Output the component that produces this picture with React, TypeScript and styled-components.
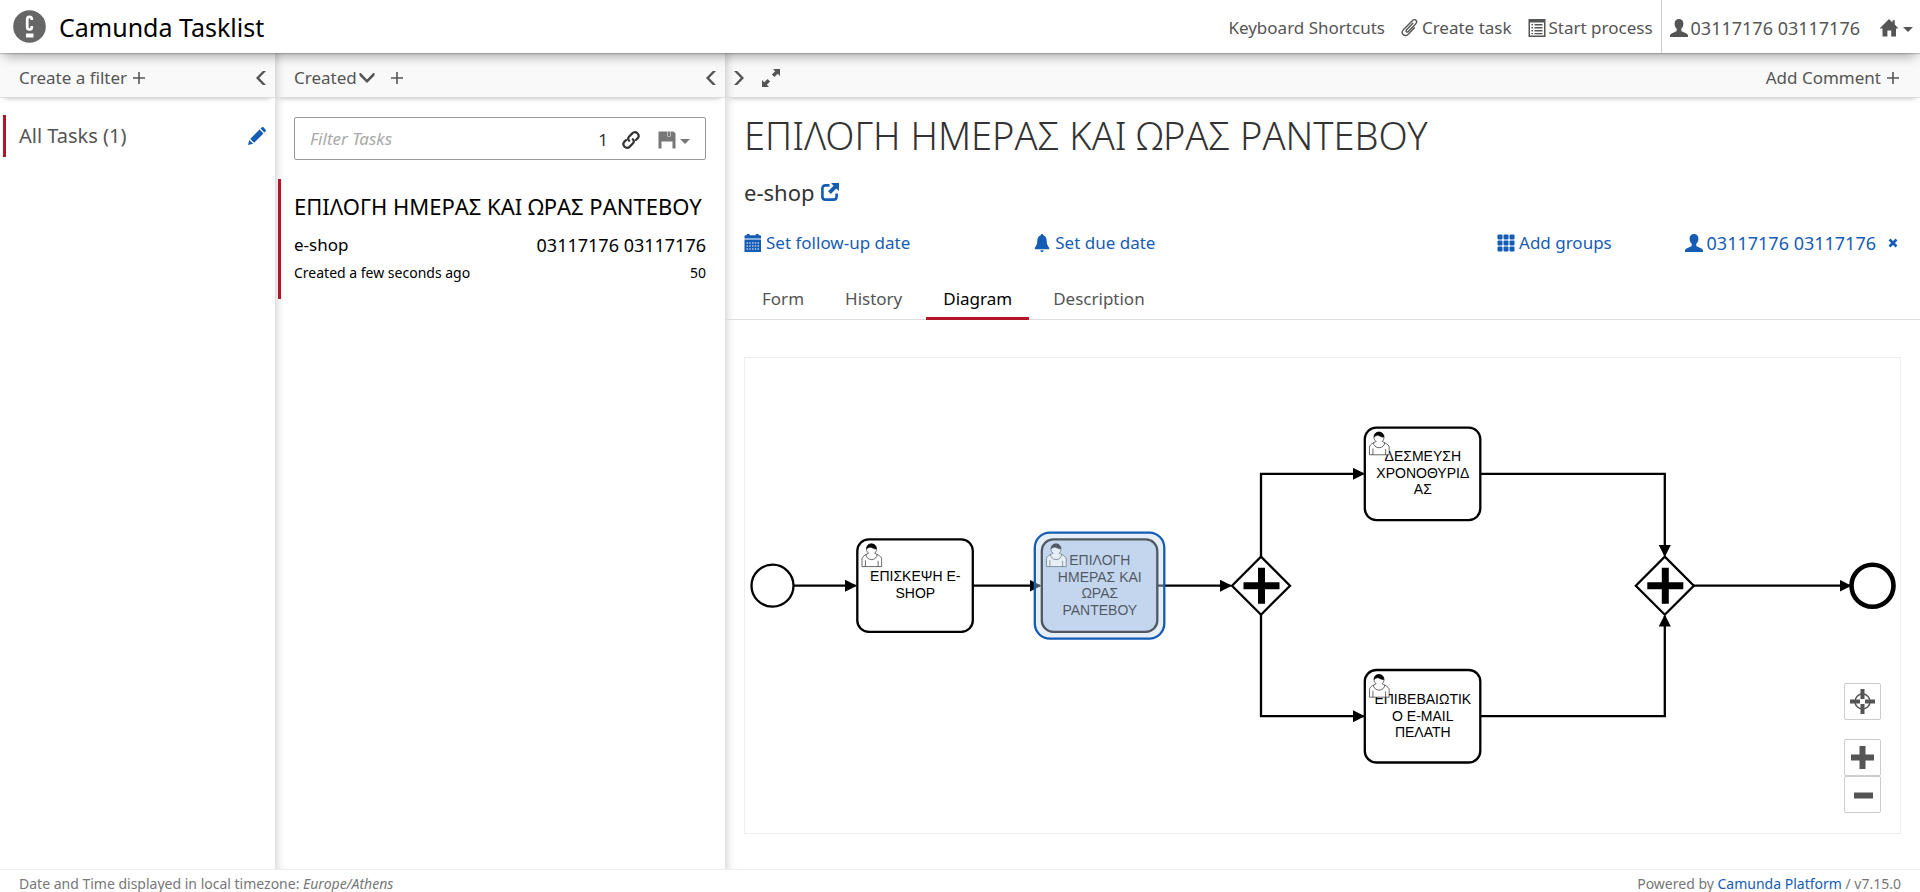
import React from 'react';
import styled, { createGlobalStyle, css } from 'styled-components';

const blue = '#155cb5';
const grey = '#555';
const red = '#b5152b';

const GlobalStyle = createGlobalStyle`
  *, *::before, *::after { box-sizing: border-box; }
  body {
    margin: 0;
    background: #fff;
    color: #333;
    font-family: 'Noto Sans', 'Open Sans', sans-serif;
    font-size: 17px;
    line-height: 24px;
  }
  h1, h2, h3, p, ul { margin: 0; padding: 0; font-weight: 400; }
  ul { list-style: none; }
  a { color: ${blue}; text-decoration: none; }
  button, input { font: inherit; color: inherit; }
`;

/* ---------- icons ---------- */

const Glyph = styled.svg<{ $size?: number }>`
  display: block;
  flex: none;
  width: ${p => p.$size ?? 18}px;
  height: ${p => p.$size ?? 18}px;
  fill: currentColor;
`;

const UserIcon = () => (
  <Glyph viewBox="0 0 18 18">
    <path d="M9 0C11.600 0 13.400 1.700 13.400 4.500C13.400 6.900 12.600 8.700 11.300 9.800V11.400C11.300 12 11.600 12.300 12.200 12.600L16.400 14.600C17.500 15.100 18 15.800 18 16.700V18H0V16.700C0 15.800 .5 15.100 1.600 14.600L5.800 12.600C6.400 12.300 6.700 12 6.700 11.400V9.800C5.400 8.700 4.600 6.900 4.600 4.500C4.600 1.700 6.400 0 9 0Z" />
  </Glyph>
);

const HomeIcon = () => (
  <Glyph viewBox="0 0 18 18">
    <path d="M9 0L12.500 3.400V1.300H14.800V5.600L18.500 9.400H16V17.500H11.200V11.600H7.400V17.500H2.500V9.400H-.5Z" />
  </Glyph>
);

const PaperclipIcon = () => (
  <Glyph viewBox="0 0 18 18">
    <path
      d="M11.800 4.200L5.600 10.800C4.300 12.200 5.900 13.900 7.300 12.500L14.600 5C17.300 2 14 -.8 11.300 1.700L2.500 10.600C-1 14.400 3.500 18.600 7.200 15.200L13.400 8.800"
      fill="none"
      stroke="currentColor"
      strokeWidth="1.400"
      strokeLinecap="round"
    />
  </Glyph>
);

const ListIcon = () => (
  <Glyph viewBox="0 0 18 18">
    <path
      fillRule="evenodd"
      d="M.5 0H17.500V18H.5ZM2 3.500V16.500H16V3.500ZM3.500 5H5V6.500H3.500ZM6.500 5H14.500V6.500H6.500ZM3.500 8H5V9.500H3.500ZM6.500 8H14.500V9.500H6.500ZM3.500 11H5V12.500H3.500ZM6.500 11H14.500V12.500H6.500ZM3.500 14H5V15.200H3.500ZM6.500 14H14.500V15.200H6.500Z"
    />
  </Glyph>
);

const PencilIcon = () => (
  <Glyph viewBox="0 0 18 18">
    <path d="M0 18L1.300 12.900L5.100 16.700ZM2.200 11.900L11.600 2.500L15.500 6.400L6.100 15.800ZM12.500 1.600L13.600 .5C14.200 -.1 15 -.1 15.600 .5L17.500 2.400C18.100 3 18.100 3.800 17.500 4.400L16.400 5.500Z" />
  </Glyph>
);

const LinkIcon = () => (
  <Glyph viewBox="0 0 18 18">
    <g fill="none" stroke="currentColor" strokeWidth="2.200" strokeLinecap="round">
      <path d="M7.200 9.800C5.800 8.400 6 6.700 7.200 5.500L10.300 2.400C12 .7 14 .9 15.400 2.300C16.900 3.800 17 5.800 15.500 7.400L13.900 9" />
      <path d="M10.800 8.200C12.200 9.600 12 11.300 10.800 12.500L7.700 15.600C6 17.300 4 17.100 2.600 15.700C1.100 14.200 1 12.200 2.500 10.600L4.100 9" />
    </g>
  </Glyph>
);

const SaveIcon = () => (
  <Glyph viewBox="0 0 18 18">
    <path fillRule="evenodd" d="M.5 .5H4V6.500H13V.5H15.500L17.500 2.500V17.500H14.500V10.500H3.500V17.500H.5ZM10 .5H12V5H10Z" />
    <path d="M4 .5H9.500V7H4ZM12.500 .5H13V7H4V5.500H12.500Z" />
  </Glyph>
);

const ExpandIcon = () => (
  <Glyph viewBox="0 0 18 18">
    <path d="M18 0V7L15.700 4.800L12.400 8.100L9.900 5.600L13.200 2.300L11 0ZM0 18V11L2.300 13.200L5.600 9.900L8.100 12.400L4.800 15.700L7 18Z" />
  </Glyph>
);

const ExternalIcon = () => (
  <Glyph viewBox="0 0 18 18">
    <path d="M10 0H18V8L15.300 5.400L9.800 10.900L7.100 8.200L12.600 2.700Z" />
    <path d="M8.500 2.400H4.600C2.600 2.400 1.400 3.600 1.400 5.600V13.400C1.400 15.400 2.600 16.600 4.600 16.600H12.400C14.400 16.600 15.600 15.400 15.600 13.400V10.500" fill="none" stroke="currentColor" strokeWidth="2.600" />
  </Glyph>
);

const CalendarIcon = () => (
  <Glyph viewBox="0 0 18 18">
    <path d="M.5 4.600V2.200Q.5 1.200 1.500 1.200H2.800V0H5.600V1.200H11.800V0H14.600V1.200H16Q17 1.200 17 2.200V4.600Z" />
    <path
      fillRule="evenodd"
      d="M.5 5.500H17V18H.5ZM2.500 8.400V9.500H4.100V8.400ZM5.300 8.400V9.500H6.800V8.400ZM8 8.400V9.500H9.500V8.400ZM10.700 8.400V9.500H12.200V8.400ZM13.400 8.400V9.500H15V8.400ZM2.500 11.400V12.500H4.100V11.400ZM5.300 11.400V12.500H6.800V11.400ZM8 11.400V12.500H9.500V11.400ZM10.700 11.400V12.500H12.200V11.400ZM13.400 11.400V12.500H15V11.400ZM2.500 14.400V15.500H4.100V14.400ZM5.300 14.400V15.500H6.800V14.400ZM8 14.400V15.500H9.500V14.400ZM10.700 14.400V15.500H12.200V14.400ZM13.400 14.400V15.500H15V14.400Z"
    />
  </Glyph>
);

const BellIcon = () => (
  <Glyph viewBox="0 0 18 18">
    <path d="M9 0C9.700 0 10.100 .5 10.200 1.200C12.600 2 13.500 4 13.700 6.500C13.900 10.500 14.500 11.700 16.200 13.600V15.200H1.800V13.600C3.500 11.700 4.100 10.500 4.300 6.500C4.500 4 5.400 2 7.800 1.200C7.900 .5 8.300 0 9 0ZM7.300 16.200H10.700C10.500 17.400 9.900 18 9 18C8.100 18 7.500 17.400 7.300 16.200Z" />
  </Glyph>
);

const GroupsIcon = () => (
  <Glyph viewBox="0 0 18 18">
    {[0.5, 6.500, 12.500].map(y =>
      [0.5, 6.500, 12.500].map(x => <rect key={`${x}-${y}`} x={x} y={y} width="5" height="5" rx="1" />),
    )}
  </Glyph>
);

const CloseIcon = () => (
  <Glyph $size={10} viewBox="0 0 10 10">
    <path d="M1.500 1.500L8.500 8.500M8.500 1.500L1.500 8.500" stroke="currentColor" strokeWidth="2.600" />
  </Glyph>
);

const PlusIcon = () => (
  <Glyph $size={12} viewBox="0 0 12 12">
    <path d="M5.200 0H6.800V5.200H12V6.800H6.800V12H5.200V6.800H0V5.200H5.200Z" />
  </Glyph>
);

const CaretIcon = () => (
  <Glyph $size={10} viewBox="0 0 10 10">
    <path d="M0 4H10L5 9Z" />
  </Glyph>
);

const chevrons = {
  left: 'M8.800 1H12L5.300 8L12 15H8.800L2 8Z',
  right: 'M7.200 1H4L10.700 8L4 15H7.200L14 8Z',
  down: 'M.5 3V5.600L8 13L15.500 5.600V3H14.200L8 9.600L1.800 3Z',
};

const Chevron = ({ to }: { to: keyof typeof chevrons }) => (
  <Glyph $size={16} viewBox="0 0 16 16">
    <path d={chevrons[to]} />
  </Glyph>
);

/* ---------- page frame ---------- */

const Page = styled.div`
  display: flex;
  flex-direction: column;
  min-height: 100vh;
`;

const TopBar = styled.header`
  position: relative;
  z-index: 2;
  display: flex;
  align-items: stretch;
  justify-content: space-between;
  height: 53px;
  padding: 0 7px 0 13px;
  background: #fff;
  box-shadow: 0 1px 1px rgba(0, 0, 0, 0.16), 0 6px 12px -4px rgba(0, 0, 0, 0.4);
`;

const Brand = styled.a`
  display: flex;
  align-items: center;
  gap: 13px;
  color: #000;
  font-size: 25px;
`;

const Logo = styled.svg`
  width: 33px;
  height: 33px;
`;

const TopNav = styled.nav`
  display: flex;
  color: ${grey};
`;

const NavItem = styled.button<{ $divided?: boolean; $number?: boolean }>`
  display: flex;
  align-items: center;
  gap: 3px;
  padding: 2px 8px 0;
  border: 0;
  background: none;
  cursor: pointer;
  font-size: ${p => (p.$number ? 18 : 17)}px;
  ${p => p.$divided && css`
    padding-right: 12px;
    border-left: 1px solid #ccc;
  `}
  &:last-child { gap: 5px; padding-right: 0; }
`;

const Columns = styled.main`
  flex: 1;
  display: grid;
  grid-template-columns: 275px 450px minmax(0, 1fr);
`;

const Column = styled.section<{ $shaded?: boolean }>`
  display: flex;
  flex-direction: column;
  min-width: 0;
  ${p => p.$shaded && css`box-shadow: inset 8px 0 8px -6px rgba(0, 0, 0, 0.18);`}
`;

const ColumnBar = styled.div<{ $wide?: boolean }>`
  display: flex;
  align-items: center;
  justify-content: space-between;
  height: 45px;
  padding: 5px ${p => (p.$wide ? 21 : 5)}px 0 ${p => (p.$wide ? 5 : 19)}px;
  border-bottom: 1px solid #dcdcdc;
  background: rgba(0, 0, 0, 0.024);
  box-shadow: 0 5px 5px -5px rgba(0, 0, 0, 0.3);
  color: ${grey};
`;

const BarGroup = styled.div<{ $gap: number }>`
  display: flex;
  align-items: center;
  gap: ${p => p.$gap}px;
`;

const PlainButton = styled.button<{ $color?: string; $gap?: number; $number?: boolean }>`
  display: inline-flex;
  align-items: center;
  gap: ${p => p.$gap ?? 4}px;
  padding: 0;
  border: 0;
  background: none;
  color: ${p => p.$color ?? 'inherit'};
  font-size: ${p => (p.$number ? 18 : 17)}px;
  cursor: pointer;
`;

/* ---------- filters ---------- */

const FilterItem = styled.li`
  display: flex;
  align-items: center;
  justify-content: space-between;
  height: 42px;
  margin: 17px 9px 0 3px;
  padding-left: 13px;
  border-left: 3px solid ${red};
  color: ${grey};
  font-size: 20px;
`;

/* ---------- task list ---------- */

const Search = styled.div`
  display: flex;
  align-items: center;
  height: 43px;
  margin: 19px 19px 0;
  padding: 0 15px;
  border: 1px solid #999;
  border-radius: 2px;
`;

const SearchInput = styled.input`
  flex: 1;
  min-width: 0;
  padding: 0;
  border: 0;
  outline: 0;
  background: none;
  &::placeholder { color: #a9a9a9; font-style: italic; opacity: 1; }
`;

const SearchTools = styled.div`
  display: flex;
  align-items: center;
  gap: 14px;
  padding-top: 2px;
  color: #333;
`;

const SavedQueries = styled.button`
  display: flex;
  align-items: center;
  gap: 4px;
  margin-left: 4px;
  padding: 0;
  border: 0;
  background: none;
  color: #777;
  cursor: pointer;
`;

const TaskItem = styled.li`
  margin: 19px 0 0 3px;
  padding: 13px 19px 16px 13px;
  border-left: 3px solid ${red};
  color: #000;
`;

const TaskTitle = styled.h3`
  font-size: 22px;
  line-height: 28px;
  white-space: nowrap;
`;

const TaskRow = styled.div<{ $small?: boolean }>`
  display: flex;
  align-items: center;
  justify-content: space-between;
  margin-top: ${p => (p.$small ? 6 : 13)}px;
  font-size: ${p => (p.$small ? 14 : 17)}px;
  line-height: ${p => (p.$small ? 20 : 24)}px;
`;

const Assignee = styled.span`
  font-size: 18px;
`;

/* ---------- task detail ---------- */

const Detail = styled.div`
  flex: 1;
  display: flex;
  flex-direction: column;
  padding-top: 13px;
`;

const Inset = styled.div`
  margin: 0 19px;
`;

const DetailTitle = styled.h1`
  font-size: 38px;
  font-weight: 300;
  line-height: 48px;
`;

const ProcessName = styled.h2`
  display: flex;
  align-items: center;
  gap: 7px;
  margin-top: 18px;
  font-size: 22px;
  line-height: 30px;
`;

const Facts = styled.div`
  display: grid;
  grid-template-columns: repeat(4, minmax(0, 1fr));
  margin-top: 24px;
`;

const Fact = styled.div<{ $end?: boolean }>`
  display: flex;
  align-items: center;
  justify-content: ${p => (p.$end ? 'flex-end' : 'flex-start')};
  gap: 12px;
  height: 24px;
  &:last-child { padding-right: 3px; }
`;

const Tabs = styled.div`
  display: flex;
  gap: 7px;
  height: 42px;
  margin-top: 23px;
  padding-left: 20px;
  border-bottom: 1px solid #ddd;
`;

const Tab = styled.button<{ $active?: boolean }>`
  height: 42px;
  padding: 2px 17px 0;
  border: 0;
  border-bottom: 3px solid ${p => (p.$active ? red : 'transparent')};
  background: none;
  color: ${p => (p.$active ? '#000' : grey)};
  cursor: pointer;
`;

const DiagramPane = styled.div`
  position: relative;
  flex: 1;
  display: flex;
  min-height: 476px;
  margin: 37px 19px 35px;
  border: 1px solid #eee;
`;

const Canvas = styled.svg`
  flex: 1;
  min-width: 0;
  font-family: 'Liberation Sans', Arial, sans-serif;
  font-size: 14px;
`;

const ZoomTools = styled.div`
  position: absolute;
  right: 19px;
  bottom: 20px;
  display: flex;
  flex-direction: column;
`;

const ZoomButton = styled.button<{ $apart?: boolean }>`
  display: flex;
  align-items: center;
  justify-content: center;
  width: 37px;
  height: 37px;
  margin-bottom: ${p => (p.$apart ? 19 : 0)}px;
  padding: 0;
  border: 1px solid #ccc;
  border-radius: 2px;
  background: #fff;
  color: ${grey};
  cursor: pointer;
`;

const Footer = styled.footer`
  display: flex;
  justify-content: space-between;
  height: 23px;
  padding: 4px 19px 0;
  border-top: 1px solid #eee;
  color: #777;
  font-size: 14px;
  line-height: 20px;
  overflow: hidden;
`;

/* ---------- diagram ---------- */

interface Activity {
  x: number;
  y: number;
  lines: string[];
  first: number;
  active?: boolean;
}

const activities: Activity[] = [
  { x: 857.300, y: 539.4, lines: ['ΕΠΙΣΚΕΨΗ E-', 'SHOP'], first: 581 },
  { x: 1364.800, y: 427.600, lines: ['ΔΕΣΜΕΥΣΗ', 'ΧΡΟΝΟΘΥΡΙΔ', 'ΑΣ'], first: 461 },
  { x: 1364.800, y: 670, lines: ['ΕΠΙΒΕΒΑΙΩΤΙΚ', 'Ο E-MAIL', 'ΠΕΛΑΤΗ'], first: 704 },
  { x: 1041.800, y: 539.4, lines: ['ΕΠΙΛΟΓΗ', 'ΗΜΕΡΑΣ ΚΑΙ', 'ΩΡΑΣ', 'ΡΑΝΤΕΒΟΥ'], first: 565, active: true },
];

const flows = [
  'M794 585.700H855.500',
  'M973 585.700H1040',
  'M1157 585.700H1230.500',
  'M1261 557V473.800H1363.500',
  'M1261 614V716.200H1363.500',
  'M1480 473.800H1664.800V555.500',
  'M1480 716.200H1664.800V616',
  'M1693 585.700H1850',
];

const ActivityShape = ({ x, y, lines, first, active }: Activity) => (
  <g>
    <rect x={x} y={y} width="115.500" height="92.500" rx="11.500" fill={active ? '#c3d6ed' : '#fff'} stroke="#000" strokeWidth="2.300" />
    <text textAnchor="middle">
      {lines.map((line, i) => (
        <tspan key={line} x={x + 58} y={Math.round(first + i * 16.600)}>{line}</tspan>
      ))}
    </text>
    <g transform={`translate(${x} ${y}) scale(1.157)`} stroke="#000" strokeWidth="0.500" fill="#fff">
      <path d="m 15,12 c 0.909,-0.845 1.594,-2.049 1.594,-3.385 0,-2.554 -1.805,-4.622 -4.357,-4.622 -2.552,0 -4.288,2.068 -4.288,4.622 0,1.348 0.974,2.562 1.896,3.405 -0.529,0.187 -5.669,2.097 -5.794,4.756 v 6.718 h 17 v -6.718 c 0,-2.298 -5.528,-4.595 -6.051,-4.776 z m -8,6 l 0,5.500 m 11,0 l 0,-5" />
      <path d="m 15,12 m 2.162,1.009 c 0,2.447 -2.158,4.431 -4.821,4.431 -2.665,0 -4.822,-1.981 -4.822,-4.431" fill="none" />
      <path d="m 15,12 m -6.900,-3.800 c 0,0 2.251,-2.358 4.274,-1.177 2.024,1.181 4.221,1.537 4.124,0.965 -0.098,-0.570 -0.117,-3.791 -4.191,-4.136 -3.572,0 -4.208,2.764 -4.207,4.348 z" fill="#000" />
    </g>
    {active && (
      <rect x={x - 7} y={y - 6.800} width="129.500" height="106" rx="15" fill="rgba(195,214,238,0.410)" stroke={blue} strokeWidth="2.300" />
    )}
  </g>
);

const Gateway = ({ x }: { x: number }) => (
  <g>
    <path d={`M${x - 29} 585.700L${x} 556.700L${x + 29} 585.700L${x} 614.700Z`} fill="#fff" stroke="#000" strokeWidth="2.300" />
    <path d={`M${x - 17.500} 585.700H${x + 18.500}M${x + 0.500} 567.700V603.700`} stroke="#000" strokeWidth="7" />
  </g>
);

const ProcessDiagram = () => (
  <Canvas viewBox="745 358 1155 475" role="img" aria-label="Process diagram">
    <defs>
      <marker id="arrow" viewBox="0 0 12 12" refX="10.500" refY="6" markerWidth="12" markerHeight="12" markerUnits="userSpaceOnUse" orient="auto">
        <path d="M0 0L12 6L0 12Z" />
      </marker>
    </defs>
    {flows.map(d => (
      <path key={d} d={d} fill="none" stroke="#000" strokeWidth="2.300" markerEnd="url(#arrow)" />
    ))}
    <circle cx="772.500" cy="585.700" r="21" fill="#fff" stroke="#000" strokeWidth="2.300" />
    <circle cx="1872.500" cy="585.700" r="21" fill="#fff" stroke="#000" strokeWidth="4.600" />
    <Gateway x={1261} />
    <Gateway x={1664.800} />
    {activities.map(a => (
      <ActivityShape key={a.lines[0]} {...a} />
    ))}
  </Canvas>
);

/* ---------- page ---------- */

export default function App() {
  return (
    <Page>
      <GlobalStyle />
      <TopBar>
        <Brand href="#">
          <Logo viewBox="0 0 33 33" aria-hidden="true">
            <circle cx="16.500" cy="16.500" r="16.300" fill="#666" />
            <path d="M18.800 10V9.300Q18.800 6.800 16.500 6.800Q14.200 6.800 14.200 9.300V17Q14.200 19.500 16.500 19.500Q18.800 19.500 18.800 17V16" fill="none" stroke="#fff" strokeWidth="2.700" />
            <path d="M13 23.500H20.500V27.500H13Z" fill="#fff" />
          </Logo>
          Camunda Tasklist
        </Brand>
        <TopNav>
          <NavItem>Keyboard Shortcuts</NavItem>
          <NavItem><PaperclipIcon />Create task</NavItem>
          <NavItem><ListIcon />Start process</NavItem>
          <NavItem $divided $number><UserIcon />03117176 03117176</NavItem>
          <NavItem aria-label="Apps"><HomeIcon /><CaretIcon /></NavItem>
        </TopNav>
      </TopBar>

      <Columns>
        <Column>
          <ColumnBar>
            <PlainButton $gap={6}>Create a filter<PlusIcon /></PlainButton>
            <PlainButton aria-label="Collapse filters"><Chevron to="left" /></PlainButton>
          </ColumnBar>
          <ul>
            <FilterItem>
              All Tasks (1)
              <PlainButton $color={blue} aria-label="Edit filter"><PencilIcon /></PlainButton>
            </FilterItem>
          </ul>
        </Column>

        <Column $shaded>
          <ColumnBar>
            <BarGroup $gap={16}>
              <PlainButton $gap={2}>Created<Chevron to="down" /></PlainButton>
              <PlainButton aria-label="Add sorting"><PlusIcon /></PlainButton>
            </BarGroup>
            <PlainButton aria-label="Collapse task list"><Chevron to="left" /></PlainButton>
          </ColumnBar>
          <Search>
            <SearchInput placeholder="Filter Tasks" aria-label="Filter Tasks" />
            <SearchTools>
              <span>1</span>
              <PlainButton aria-label="Copy link"><LinkIcon /></PlainButton>
              <SavedQueries aria-label="Saved queries"><SaveIcon /><CaretIcon /></SavedQueries>
            </SearchTools>
          </Search>
          <ul>
            <TaskItem>
              <TaskTitle>ΕΠΙΛΟΓΗ ΗΜΕΡΑΣ ΚΑΙ ΩΡΑΣ ΡΑΝΤΕΒΟΥ</TaskTitle>
              <TaskRow><span>e-shop</span><Assignee>03117176 03117176</Assignee></TaskRow>
              <TaskRow $small><span>Created a few seconds ago</span><span>50</span></TaskRow>
            </TaskItem>
          </ul>
        </Column>

        <Column $shaded>
          <ColumnBar $wide>
            <BarGroup $gap={16}>
              <PlainButton aria-label="Expand task list"><Chevron to="right" /></PlainButton>
              <PlainButton aria-label="Full screen"><ExpandIcon /></PlainButton>
            </BarGroup>
            <PlainButton $gap={6}>Add Comment<PlusIcon /></PlainButton>
          </ColumnBar>
          <Detail>
            <Inset>
              <DetailTitle>ΕΠΙΛΟΓΗ ΗΜΕΡΑΣ ΚΑΙ ΩΡΑΣ ΡΑΝΤΕΒΟΥ</DetailTitle>
              <ProcessName>
                e-shop
                <PlainButton $color={blue} aria-label="Open process"><ExternalIcon /></PlainButton>
              </ProcessName>
              <Facts>
                <Fact><PlainButton $color={blue}><CalendarIcon />Set follow-up date</PlainButton></Fact>
                <Fact><PlainButton $color={blue}><BellIcon />Set due date</PlainButton></Fact>
                <Fact $end><PlainButton $color={blue}><GroupsIcon />Add groups</PlainButton></Fact>
                <Fact $end>
                  <PlainButton $color={blue} $number><UserIcon />03117176 03117176</PlainButton>
                  <PlainButton $color={blue} aria-label="Reset assignee"><CloseIcon /></PlainButton>
                </Fact>
              </Facts>
            </Inset>
            <Tabs role="tablist">
              <Tab role="tab">Form</Tab>
              <Tab role="tab">History</Tab>
              <Tab role="tab" aria-selected $active>Diagram</Tab>
              <Tab role="tab">Description</Tab>
            </Tabs>
            <DiagramPane>
              <ProcessDiagram />
              <ZoomTools>
                <ZoomButton $apart aria-label="Reset zoom">
                  <Glyph $size={25} viewBox="0 0 25 25">
                    <circle cx="12.500" cy="12.500" r="7.500" fill="none" stroke="currentColor" strokeWidth="1.500" />
                    <path d="M12.500 0V10M12.500 15V25M0 12.500H10M15 12.500H25" stroke="currentColor" strokeWidth="4" />
                  </Glyph>
                </ZoomButton>
                <ZoomButton aria-label="Zoom in">
                  <Glyph $size={23} viewBox="0 0 23 23">
                    <path d="M11.500 0V23M0 11.500H23" stroke="currentColor" strokeWidth="6" />
                  </Glyph>
                </ZoomButton>
                <ZoomButton aria-label="Zoom out">
                  <Glyph $size={23} viewBox="0 0 23 23">
                    <path d="M3 12.500H22" stroke="currentColor" strokeWidth="6" />
                  </Glyph>
                </ZoomButton>
              </ZoomTools>
            </DiagramPane>
          </Detail>
        </Column>
      </Columns>

      <Footer>
        <span>Date and Time displayed in local timezone: <em>Europe/Athens</em></span>
        <span>Powered by <a href="#">Camunda Platform</a> / v7.15.0</span>
      </Footer>
    </Page>
  );
}
